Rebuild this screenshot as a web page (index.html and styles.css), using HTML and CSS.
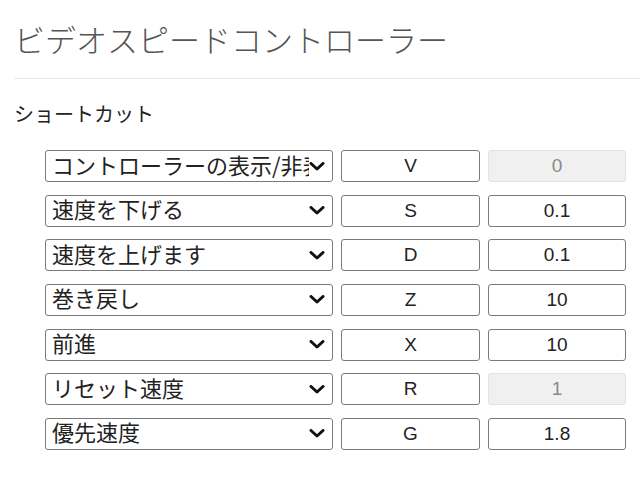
FILE: index.html
```html
<!DOCTYPE html>
<html lang="ja">
<head>
<meta charset="utf-8">
<title>ビデオスピードコントローラー</title>
<link rel="stylesheet" href="styles.css">
</head>
<body>
<div class="page">
  <h1 class="title">ビデオスピードコントローラー</h1>
  <hr class="rule">
  <h2 class="section">ショートカット</h2>
  <div class="shortcuts">
    <div class="sel"><span class="sel-text">コントローラーの表示/非表示</span><svg class="chev" viewBox="0 0 16 9" width="16" height="9"><path d="M2 1.5 L8 7 L14 1.5" fill="none" stroke="#111" stroke-width="3" stroke-linecap="round" stroke-linejoin="round"/></svg></div>
    <div class="key">V</div>
    <div class="val disabled">0</div>

    <div class="sel"><span class="sel-text">速度を下げる</span><svg class="chev" viewBox="0 0 16 9" width="16" height="9"><path d="M2 1.5 L8 7 L14 1.5" fill="none" stroke="#111" stroke-width="3" stroke-linecap="round" stroke-linejoin="round"/></svg></div>
    <div class="key">S</div>
    <div class="val">0.1</div>

    <div class="sel"><span class="sel-text">速度を上げます</span><svg class="chev" viewBox="0 0 16 9" width="16" height="9"><path d="M2 1.5 L8 7 L14 1.5" fill="none" stroke="#111" stroke-width="3" stroke-linecap="round" stroke-linejoin="round"/></svg></div>
    <div class="key">D</div>
    <div class="val">0.1</div>

    <div class="sel"><span class="sel-text">巻き戻し</span><svg class="chev" viewBox="0 0 16 9" width="16" height="9"><path d="M2 1.5 L8 7 L14 1.5" fill="none" stroke="#111" stroke-width="3" stroke-linecap="round" stroke-linejoin="round"/></svg></div>
    <div class="key">Z</div>
    <div class="val">10</div>

    <div class="sel"><span class="sel-text">前進</span><svg class="chev" viewBox="0 0 16 9" width="16" height="9"><path d="M2 1.5 L8 7 L14 1.5" fill="none" stroke="#111" stroke-width="3" stroke-linecap="round" stroke-linejoin="round"/></svg></div>
    <div class="key">X</div>
    <div class="val">10</div>

    <div class="sel"><span class="sel-text">リセット速度</span><svg class="chev" viewBox="0 0 16 9" width="16" height="9"><path d="M2 1.5 L8 7 L14 1.5" fill="none" stroke="#111" stroke-width="3" stroke-linecap="round" stroke-linejoin="round"/></svg></div>
    <div class="key">R</div>
    <div class="val disabled">1</div>

    <div class="sel"><span class="sel-text">優先速度</span><svg class="chev" viewBox="0 0 16 9" width="16" height="9"><path d="M2 1.5 L8 7 L14 1.5" fill="none" stroke="#111" stroke-width="3" stroke-linecap="round" stroke-linejoin="round"/></svg></div>
    <div class="key">G</div>
    <div class="val">1.8</div>
  </div>
</div>
</body>
</html>
```
FILE: styles.css
```css
html, body {
  margin: 0;
  padding: 0;
  background: #ffffff;
}
.page {
  padding-left: 14px;
  font-family: "Noto Sans CJK JP", "Noto Sans", sans-serif;
  color: #222;
}
.title {
  margin: 21px 0 0 0;
  font-size: 31px;
  line-height: 36px;
  font-weight: 300;
  color: #555;
}
.rule {
  margin: 21px 0 0 0;
  border: 0;
  border-top: 1px solid #e9e9e9;
  height: 0;
}
.section {
  margin: 21px 0 0 0;
  font-size: 20px;
  line-height: 28px;
  font-weight: 400;
  color: #222;
}
.shortcuts {
  margin: 22px 0 0 31px;
  display: grid;
  grid-template-columns: 288px 139px 138px;
  column-gap: 8px;
  row-gap: 12.67px;
  grid-auto-rows: 32px;
}
.sel, .key, .val {
  box-sizing: border-box;
  border: 1px solid #7a7a7a;
  border-radius: 3px;
  display: flex;
  align-items: center;
}
.sel {
  padding: 0 7px 0 6px;
}
.sel-text {
  flex: 1;
  min-width: 0;
  white-space: nowrap;
  overflow: visible;
  clip-path: inset(-8px 0 -8px 0);
  font-size: 22px;
  line-height: 28px;
  padding-bottom: 5px;
  color: #222;
}
.chev {
  flex: none;
}
.key, .val {
  justify-content: center;
  font-family: "Liberation Sans", Arial, sans-serif;
  font-size: 19px;
  color: #222;
}
.val.disabled {
  background: #f0f0f0;
  border-color: #e2e2e2;
  color: #8a8a8a;
}
```
